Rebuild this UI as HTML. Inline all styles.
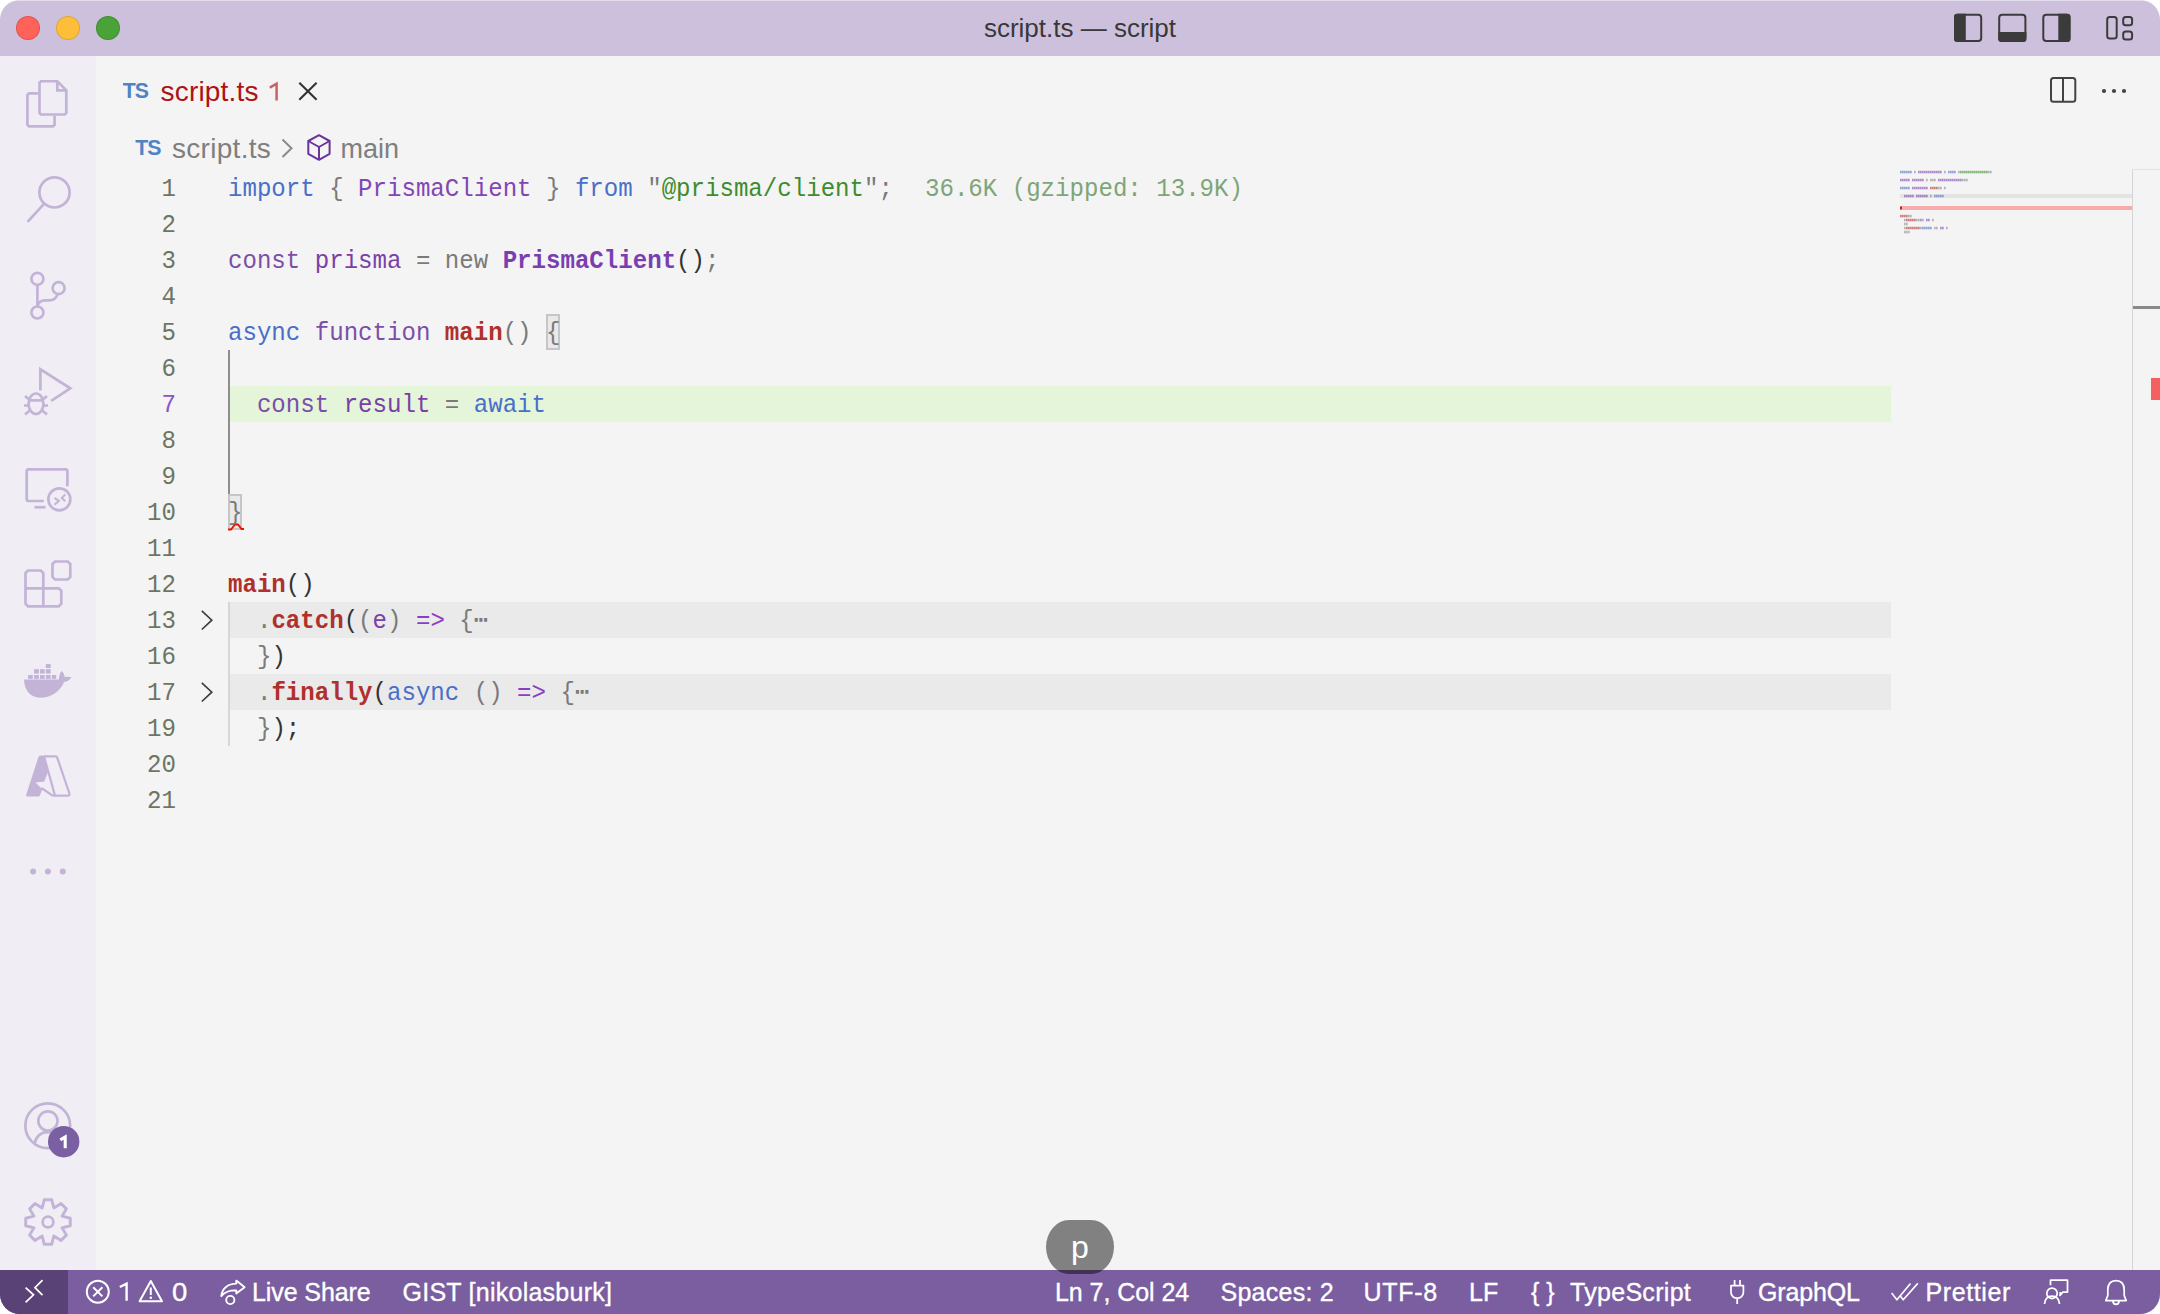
<!DOCTYPE html>
<html><head><meta charset="utf-8">
<style>
*{margin:0;padding:0;box-sizing:border-box}
html,body{width:2160px;height:1314px;overflow:hidden;background:#ffffff}
body{position:relative;font-family:"Liberation Sans",sans-serif}
.abs{position:absolute}
#win{position:absolute;left:0;top:0;width:2160px;height:1314px;border-radius:20px;overflow:hidden;background:#f3f3f3}
#title{position:absolute;left:0;top:0;width:2160px;height:56px;background:#cdc0dd}
#title .t{position:absolute;left:0;width:2160px;top:0;height:56px;line-height:56px;text-align:center;font-size:26px;color:#383838}
.tl{position:absolute;top:16px;width:24px;height:24px;border-radius:50%;box-shadow:inset 0 0 0 1px rgba(0,0,0,0.13)}
#act{position:absolute;left:0;top:56px;width:96px;height:1214px;background:#f0eef4}
#status{position:absolute;left:0;top:1270px;width:2160px;height:44px;background:#7a5ea0;color:#fff;font-size:25px}
.it{position:absolute;height:44px;line-height:44px;white-space:nowrap;font-size:25px;color:#fff;-webkit-text-stroke:0.35px #fff}
#editor{position:absolute;left:96px;top:56px;width:2064px;height:1214px;background:#f4f4f4}
.code{position:absolute;font-family:"Liberation Mono",monospace;font-size:26px;line-height:36px;white-space:pre;transform:scaleX(0.9263);transform-origin:0 0}
.ln{position:absolute;left:96px;width:80px;text-align:right;font-family:"Liberation Mono",monospace;font-size:26px;line-height:36px;color:#6d7563;transform:scaleX(0.9263);transform-origin:100% 0}

.kw{color:#4a6fc8}
.g{color:#7a7a7a}
.d{color:#333333}
.ty{color:#8245b4}
.tyb{color:#7a3eb0;font-weight:bold}
.pu{color:#7b4fa8}
.pv{color:#7a40a8}
.str{color:#3d8c2d}
.dec{color:#7ea579}
.fn{color:#b0302c;font-weight:bold}
.ar{color:#8a3fc0}
</style></head><body>
<div id="win">
  <div id="title">
    <div class="tl" style="left:16px;background:#fe6259"></div>
    <div class="tl" style="left:56px;background:#fdbf3a"></div>
    <div class="tl" style="left:96px;background:#4aa337"></div>
    <div class="abs" style="left:0;top:0;width:2160px;height:1px;background:rgba(255,255,255,0.45)"></div>
    <div class="t">script.ts — script</div>

  <svg class="abs" style="left:1940px;top:0" width="220" height="56" viewBox="1940 0 220 56">
    <g fill="none" stroke="#3b3b3b" stroke-width="2">
      <rect x="1955" y="14.7" width="26.2" height="26.2" rx="3"/>
      <rect x="1999.2" y="14.7" width="26.2" height="26.2" rx="3"/>
      <rect x="2043.3" y="14.7" width="26.2" height="26.2" rx="3"/>
      <rect x="2107.2" y="17" width="9.5" height="21.6" rx="2.5"/>
      <rect x="2123.2" y="17" width="8.9" height="8.2" rx="2.5"/>
      <rect x="2123.2" y="31.4" width="8.9" height="8.2" rx="2.5"/>
    </g>
    <g fill="#3b3b3b">
      <path d="M1957 13.7 L1965.8 13.7 L1965.8 41.9 L1957 41.9 Q1954 41.9 1954 38.9 L1954 16.7 Q1954 13.7 1957 13.7Z"/>
      <path d="M1998.2 32 L2026.4 32 L2026.4 38.9 Q2026.4 41.9 2023.4 41.9 L2001.2 41.9 Q1998.2 41.9 1998.2 38.9Z"/>
      <path d="M2058.3 13.7 L2067.5 13.7 Q2070.5 13.7 2070.5 16.7 L2070.5 38.9 Q2070.5 41.9 2067.5 41.9 L2058.3 41.9Z"/>
    </g>
  </svg>

  </div>
  <div id="act"></div>
  <svg class="abs" style="left:0;top:0" width="96" height="1270" viewBox="0 0 96 1270">
    <g fill="none" stroke="#c3b3d7" stroke-width="2.7" stroke-linejoin="miter">
      <!-- explorer -->
      <path d="M38 93.4 L29 93.4 L27.4 95 L27.4 124.8 L29 126.4 L53 126.4 L54.6 124.8 L54.6 115.8"/>
      <path d="M57.3 81.25 L41 81.25 L39.5 82.8 L39.5 113 L41 114.5 L64.8 114.5 L66.3 113 L66.3 90.3 Z M57.3 81.25 L57.3 90.3 L66.3 90.3"/>
      <!-- search -->
      <circle cx="54.5" cy="192.4" r="15.1"/>
      <path d="M44 203.8 L27.6 221.8"/>
      <!-- source control -->
      <circle cx="37.4" cy="278.9" r="6"/>
      <circle cx="37.4" cy="312.5" r="6"/>
      <circle cx="58.6" cy="288.1" r="6"/>
      <path d="M37.4 285 L37.4 306.5"/>
      <path d="M57.5 294 C56.5 298.5 53.5 300.3 49 300.3 L45 300.3 C41 300.3 38.3 302.5 37.6 306"/>
      <!-- run debug -->
      <path d="M40.4 390.5 L40.4 369.3 L70.3 388.3 L51.2 400.8"/>
      <ellipse cx="36" cy="403.8" rx="7.4" ry="10.3"/>
      <path d="M29.5 400.4 L42.5 400.4"/>
      <path d="M25 396 L29.8 400 M47 396 L42.2 400 M24 405.5 L28.7 405.5 M48 405.5 L43.3 405.5 M25 414.5 L29.8 410.5 M47 414.5 L42.2 410.5"/>
      <!-- remote explorer -->
      <path d="M43.8 501 L28.7 501 Q26.7 501 26.7 499 L26.7 471.4 Q26.7 469.4 28.7 469.4 L65.4 469.4 Q67.4 469.4 67.4 471.4 L67.4 486.2"/>
      <path d="M34.5 507.2 L45.5 507.2"/>
      <circle cx="59.35" cy="499.35" r="11"/>
      <path d="M54.5 497.9 L58.9 500.8 L54.5 504.7 M65.2 494.5 L61.8 497.9 L65.2 501.3" stroke-width="2"/>
      <!-- extensions -->
      <path d="M25.5 573 L28 570.5 L40.8 570.5 L43.3 573 L43.3 588.3 L58.8 588.3 L61.3 590.8 L61.3 603.8 L58.8 606.3 L28 606.3 L25.5 603.8 Z M25.5 588.3 L43.3 588.3 L43.3 606.3"/>
      <path d="M52.5 564 L55 561.5 L67.8 561.5 L70.3 564 L70.3 577 L67.8 579.5 L55 579.5 L52.5 577 Z"/>
      <!-- azure outline -->
      <path d="M44 756.3 L55.5 756.3 Q56.8 756.3 57.3 757.8 L69.4 793.5 Q69.9 795.6 67.8 795.6 L53.5 795.6 Q52.5 795.6 51.5 794.8 L41.5 788" stroke-width="2.2"/>
      <path d="M44.3 757.2 L54.9 795.4" stroke-width="2.2"/>
      <!-- accounts -->
      <circle cx="47.75" cy="1125.75" r="22.4"/>
      <circle cx="47.9" cy="1120.9" r="9.6"/>
      <path d="M34.6 1143.2 Q37.5 1132.2 47.9 1132.2 Q55 1132.2 58.5 1137"/>
      <!-- gear -->
      <path stroke-width="2.9" d="M42.18 1207.96 L44.27 1199.71 L51.73 1199.71 L53.82 1207.96 L61.12 1203.60 L66.40 1208.88 L62.04 1216.18 L70.29 1218.27 L70.29 1225.73 L62.04 1227.82 L66.40 1235.12 L61.12 1240.40 L53.82 1236.04 L51.73 1244.29 L44.27 1244.29 L42.18 1236.04 L34.88 1240.40 L29.60 1235.12 L33.96 1227.82 L25.71 1225.73 L25.71 1218.27 L33.96 1216.18 L29.60 1208.88 L34.88 1203.60Z" stroke-linejoin="round"/>
      <circle cx="48" cy="1222" r="5.4"/>
    </g>
    <g fill="#c3b3d7">
      <!-- docker -->
      <path d="M24 679.6 L58.9 679.6 C59.2 675.5 60 672.5 61.6 671 C63.6 672.7 64.6 675 64.6 677 C67 676.5 69.5 676.6 71.5 677.3 C70 680 67.2 681.8 64.1 682.1 C59.8 692.5 50 697.8 40.4 697.8 C30 697.8 24.3 690 24 679.6 Z"/>
      <rect x="28.1" y="675" width="4.7" height="3.9"/><rect x="34" y="675" width="4.9" height="3.9"/><rect x="40" y="675" width="4.7" height="3.9"/><rect x="45.8" y="675" width="4.9" height="3.9"/><rect x="51.8" y="675" width="4.4" height="3.9"/>
      <rect x="34" y="669.2" width="4.9" height="4.4"/><rect x="40" y="669.2" width="4.7" height="4.4"/><rect x="45.8" y="669.2" width="4.9" height="4.4"/>
      <rect x="45.8" y="664.1" width="4.9" height="3.9"/>
      <!-- azure filled -->
      <path d="M40.5 755.4 L44 755.4 L47.7 772.7 L44.3 781.5 L35.5 782.5 L42.3 789.3 L39.9 795.5 Q39.5 796.6 38 796.6 L27.8 796.6 Q25.7 796.6 26.3 794.5 L38.4 757 Q38.9 755.4 40.5 755.4 Z"/>
      <!-- more -->
      <circle cx="33.1" cy="871.6" r="3"/><circle cx="47.9" cy="871.6" r="3"/><circle cx="62.8" cy="871.6" r="3"/>
      <!-- badge -->
      <circle cx="63.7" cy="1141.7" r="15.7" fill="#7b5fa3"/>
    </g>
    <path d="M60.3 1139.9 L65.2 1137 L65.2 1148.2" fill="none" stroke="#fff" stroke-width="3.1" stroke-linejoin="miter"/>
  </svg>

  <div id="editor"></div>
  
  <!-- tab -->
  <svg class="abs" style="left:118px;top:76px" width="36" height="28" viewBox="0 0 36 28"><text x="4.8" y="22.2" font-family="Liberation Sans" font-weight="bold" font-size="21.3" fill="#4f84c4" letter-spacing="-1">TS</text></svg>
  <div class="abs ui" style="left:160.5px;top:71px;font-size:28px;line-height:42px;color:#ad1313;white-space:nowrap;letter-spacing:0.2px">script.ts</div>
  <svg class="abs" style="left:264px;top:80px" width="20" height="24" viewBox="264 80 20 24"><path d="M269.8 87.6 L276.6 83.6 L276.6 100.5" fill="none" stroke="#c96363" stroke-width="2.5" stroke-linejoin="miter"/></svg>
  <svg class="abs" style="left:296px;top:80px" width="24" height="22" viewBox="0 0 24 22"><path d="M3.3 2.7 L20.6 19.7 M20.6 2.7 L3.3 19.7" stroke="#333" stroke-width="2.1" fill="none"/></svg>
  <svg class="abs" style="left:2040px;top:70px" width="100" height="40" viewBox="2040 70 100 40">
    <rect x="2051" y="77.9" width="24.3" height="23.8" rx="2.5" fill="none" stroke="#424242" stroke-width="2"/>
    <path d="M2063 78 L2063 101.5" stroke="#424242" stroke-width="2"/>
    <circle cx="2104" cy="91" r="2.1" fill="#424242"/><circle cx="2114" cy="91" r="2.1" fill="#424242"/><circle cx="2124" cy="91" r="2.1" fill="#424242"/>
  </svg>
  <!-- breadcrumbs -->
  <svg class="abs" style="left:130px;top:132px" width="36" height="28" viewBox="0 0 36 28"><text x="5.3" y="22.7" font-family="Liberation Sans" font-weight="bold" font-size="21.3" fill="#4f84c4" letter-spacing="-1">TS</text></svg>
  <div class="abs ui" style="left:172px;top:127.5px;font-size:28px;line-height:42px;color:#7f7f7f;white-space:nowrap;letter-spacing:0.3px">script.ts</div>
  <svg class="abs" style="left:278px;top:136px" width="18" height="24" viewBox="0 0 18 24"><path d="M4.5 3.5 L13.5 12.3 L4.5 21" stroke="#8a8a8a" stroke-width="2" fill="none"/></svg>
  <svg class="abs" style="left:302px;top:130px" width="34" height="34" viewBox="0 0 34 34">
    <g fill="none" stroke="#6a349c" stroke-width="2" stroke-linejoin="round">
      <path d="M17 5.2 L27.6 11 L27.6 23.8 L17 29.8 L6.3 23.8 L6.3 11 Z"/>
      <path d="M6.3 11 L17 17 L27.6 11 M17 17 L17 29.8"/>
    </g>
  </svg>
  <div class="abs ui" style="left:340.5px;top:128px;font-size:27px;line-height:42px;color:#7f7f7f;white-space:nowrap">main</div>

  <!-- editor decorations -->
  <div class="abs" style="left:230px;top:386px;width:1661px;height:36px;background:#e5f5d9"></div>
  <div class="abs" style="left:228px;top:602px;width:1663px;height:36px;background:#eaeaea"></div>
  <div class="abs" style="left:228px;top:674px;width:1663px;height:36px;background:#eaeaea"></div>
  <div class="abs" style="left:228px;top:350px;width:2px;height:144px;background:#8e8e8e"></div>
  <div class="abs" style="left:228px;top:602px;width:2px;height:144px;background:#d6d6d6"></div>
  <div class="abs" style="left:546px;top:314px;width:14px;height:36px;background:#e9e9e9;border:2px solid #c6c6c6"></div>
  <div class="abs" style="left:228px;top:494px;width:14px;height:36px;background:#e9e9e9;border:2px solid #c6c6c6"></div>
  <svg class="abs" style="left:227px;top:521px" width="18" height="10" viewBox="0 0 18 10"><path d="M1 8.5 L4 8.5 L8 3.5 L11 3.5 L14.5 8 L17 8" fill="none" stroke="#e51400" stroke-width="1.8"/></svg>
  <svg class="abs" style="left:200px;top:610px" width="14" height="22" viewBox="0 0 14 22"><path d="M1.8 0.9 L11.8 10.2 L1.8 19.5" fill="none" stroke="#3f3f3f" stroke-width="1.7"/></svg>
  <svg class="abs" style="left:200px;top:682px" width="14" height="22" viewBox="0 0 14 22"><path d="M1.8 0.9 L11.8 10.2 L1.8 19.5" fill="none" stroke="#3f3f3f" stroke-width="1.7"/></svg>
  <!-- line numbers -->
  <div class="ln" style="top:171px">1</div>
  <div class="ln" style="top:207px">2</div>
  <div class="ln" style="top:243px">3</div>
  <div class="ln" style="top:279px">4</div>
  <div class="ln" style="top:315px">5</div>
  <div class="ln" style="top:351px">6</div>
  <div class="ln" style="top:387px;color:#8a55c8">7</div>
  <div class="ln" style="top:423px">8</div>
  <div class="ln" style="top:459px">9</div>
  <div class="ln" style="top:495px">10</div>
  <div class="ln" style="top:531px">11</div>
  <div class="ln" style="top:567px">12</div>
  <div class="ln" style="top:603px">13</div>
  <div class="ln" style="top:639px">16</div>
  <div class="ln" style="top:675px">17</div>
  <div class="ln" style="top:711px">19</div>
  <div class="ln" style="top:747px">20</div>
  <div class="ln" style="top:783px">21</div>
  <!-- code -->
  <div class="code" style="left:228px;top:171px"><span class="kw">import</span> <span class="g">{</span> <span class="ty">PrismaClient</span> <span class="g">}</span> <span class="kw">from</span> <span class="g">"</span><span class="str">@prisma/client</span><span class="g">";</span></div>
  <div class="code" style="left:924.5px;top:171px"><span class="dec">36.6K (gzipped: 13.9K)</span></div>
  <div class="code" style="left:228px;top:243px"><span class="pu">const</span> <span class="pv">prisma</span> <span class="g">=</span> <span class="g">new</span> <span class="tyb">PrismaClient</span><span class="d">()</span><span class="g">;</span></div>
  <div class="code" style="left:228px;top:315px"><span class="kw">async</span> <span class="pu">function</span> <span class="fn">main</span><span class="g">()</span> <span class="g">{</span></div>
  <div class="code" style="left:228px;top:387px">  <span class="pu">const</span> <span class="pv">result</span> <span class="g">=</span> <span class="kw">await</span></div>
  <div class="code" style="left:228px;top:495px"><span class="g">}</span></div>
  <div class="code" style="left:228px;top:567px"><span class="fn">main</span><span class="d">()</span></div>
  <div class="code" style="left:228px;top:603px">  <span class="g">.</span><span class="fn">catch</span><span class="d">(</span><span class="g">(</span><span class="pv">e</span><span class="g">)</span> <span class="ar">=&gt;</span> <span class="g">{</span><span class="g">&#x22EF;</span></div>
  <div class="code" style="left:228px;top:639px">  <span class="g">}</span><span class="d">)</span></div>
  <div class="code" style="left:228px;top:675px">  <span class="g">.</span><span class="fn">finally</span><span class="d">(</span><span class="kw">async</span> <span class="g">()</span> <span class="ar">=&gt;</span> <span class="g">{</span><span class="g">&#x22EF;</span></div>
  <div class="code" style="left:228px;top:711px">  <span class="g">}</span><span class="d">);</span></div>

  <div id="status"></div>
  <div class="abs" style="left:0;top:1270px;width:68px;height:44px;background:#584276"></div>
  <svg class="abs" style="left:0;top:1270px" width="68" height="44" viewBox="0 0 68 44">
    <path d="M25.6 17.7 L33.5 24.8 L25.6 32.3 M42.5 10.2 L35 17.7 L42.5 25.2" stroke="#fff" stroke-width="1.75" fill="none"/>
  </svg>
  <svg class="abs" style="left:80px;top:1270px" width="180" height="44" viewBox="80 1270 180 44">
    <g fill="none" stroke="#fff" stroke-width="2">
      <circle cx="97.8" cy="1291.8" r="11"/>
      <path d="M93.2 1287.2 L102.4 1296.4 M102.4 1287.2 L93.2 1296.4"/>
      <path d="M150.8 1281 L162 1301.3 L139.6 1301.3 Z" stroke-linejoin="round"/>
      <path d="M150.8 1287.5 L150.8 1295"/>
    </g>
    <circle cx="150.8" cy="1297.7" r="1.3" fill="#fff"/>
    <g fill="none" stroke="#fff" stroke-width="2" stroke-linejoin="round">
      <path d="M236.3 1280.6 L244.6 1287.2 L236.3 1293.4 L236.3 1290.4 C229.5 1290.2 224.5 1292.4 221.3 1296 C222 1288.3 228 1283.7 236.3 1283.6 Z" stroke-width="1.9"/>
      <circle cx="230.3" cy="1300" r="4.1" stroke-width="1.9"/>
    </g>
  </svg>
  <svg class="abs" style="left:114px;top:1278px" width="20" height="26" viewBox="114 1278 20 26"><path d="M119.8 1287 L126.6 1283.6 L126.6 1300.8" fill="none" stroke="#fff" stroke-width="2.4" stroke-linejoin="miter"/></svg>
  <div class="it" style="left:172px;top:1270px;transform:scaleX(1.1);transform-origin:0 0">0</div>
  <div class="it" style="left:252px;top:1270px;letter-spacing:-0.1px">Live Share</div>
  <div class="it" style="left:402.5px;top:1270px;letter-spacing:0.25px">GIST [nikolasburk]</div>
  <div class="it" style="left:1055px;top:1270px;letter-spacing:-0.05px">Ln 7, Col 24</div>
  <div class="it" style="left:1220.5px;top:1270px;letter-spacing:0.25px">Spaces: 2</div>
  <div class="it" style="left:1363.5px;top:1270px;letter-spacing:0.7px">UTF-8</div>
  <div class="it" style="left:1469px;top:1270px">LF</div>
  <div class="it" style="left:1531px;top:1270px">{ }</div>
  <div class="it" style="left:1570px;top:1270px;letter-spacing:0.3px">TypeScript</div>
  <div class="it" style="left:1758px;top:1270px;letter-spacing:-0.15px">GraphQL</div>
  <div class="it" style="left:1925.5px;top:1270px;letter-spacing:0.6px">Prettier</div>
  <svg class="abs" style="left:1720px;top:1270px" width="440" height="44" viewBox="1720 1270 440 44">
    <g fill="none" stroke="#fff" stroke-width="1.75" stroke-linejoin="round">
      <path d="M1734.6 1280 L1734.6 1285.5 M1740 1280 L1740 1285.5"/>
      <path d="M1731 1285.6 L1743.4 1285.6 L1743.4 1292.3 C1743.4 1295.8 1740.6 1298.2 1737.2 1298.2 C1733.8 1298.2 1731 1295.8 1731 1292.3 Z"/>
      <path d="M1737.2 1298.2 L1737.2 1304"/>
      <path d="M1891.6 1293 L1896.9 1299.8 L1910.5 1283.4 M1900.3 1295.9 L1903.2 1299.8 L1917.8 1283.4" stroke-width="1.6"/>
      <circle cx="2052" cy="1293.3" r="5.2"/>
      <path d="M2044.5 1304 C2045 1298.5 2048 1296 2052 1296 C2056 1296 2059 1298.5 2059.5 1304"/>
      <path d="M2050.5 1285.3 L2050.5 1280.2 L2067.5 1280.2 L2067.5 1292 L2063 1292 L2060 1295.4 L2060.4 1292"/>
      <path d="M2116 1280.5 C2110 1280.5 2107.8 1285 2107.8 1290 L2107.8 1295.5 L2105.8 1300.6 L2126.2 1300.6 L2124.2 1295.5 L2124.2 1290 C2124.2 1285 2122 1280.5 2116 1280.5 Z"/>
      <path d="M2113 1301 C2113 1303.5 2114.3 1304.3 2116 1304.3 C2117.7 1304.3 2119 1303.5 2119 1301"/>
    </g>
  </svg>
  <!-- keystroke bubble -->
  <div class="abs" style="left:1046px;top:1220px;width:68px;height:54px;border-radius:23px/27px;background:rgba(0,0,0,0.47)"></div>
  <div class="abs ui" style="left:1046px;top:1221.5px;width:68px;height:54px;line-height:50px;text-align:center;font-size:32px;color:#fff">p</div>

  <div class="abs" style="left:2132px;top:170px;width:1px;height:1100px;background:#d4d4d4"></div>
  <div class="abs" style="left:2132px;top:169px;width:28px;height:1px;background:#e2e2e2"></div>
  <div class="abs" style="left:2133px;top:306px;width:27px;height:3px;background:#8a8a8a"></div>
  <div class="abs" style="left:2151px;top:378px;width:9px;height:22px;background:#f45f5f"></div>
  <svg class="abs" style="left:1900px;top:170px" width="232" height="70" viewBox="0 0 232 70">
    <rect x="0" y="24" width="232" height="4" fill="#e4e4e4"/>
    <rect x="0" y="36" width="232" height="4" fill="#f7abab"/>
    <rect x="0" y="36.5" width="2" height="3" fill="#c02a2a"/>
    <g opacity="0.6">
<rect x="0" y="0.8" width="1.7" height="2.5" fill="#4a6fc8"/>
<rect x="2" y="0.8" width="1.7" height="2.5" fill="#4a6fc8"/>
<rect x="4" y="0.8" width="1.7" height="2.5" fill="#4a6fc8"/>
<rect x="6" y="0.8" width="1.7" height="2.5" fill="#4a6fc8"/>
<rect x="8" y="0.8" width="1.7" height="2.5" fill="#4a6fc8"/>
<rect x="10" y="0.8" width="1.7" height="2.5" fill="#4a6fc8"/>
<rect x="14" y="0.8" width="1.7" height="2.5" fill="#8a8a8a"/>
<rect x="18" y="0.8" width="1.7" height="2.5" fill="#7e45b0"/>
<rect x="20" y="0.8" width="1.7" height="2.5" fill="#7e45b0"/>
<rect x="22" y="0.8" width="1.7" height="2.5" fill="#7e45b0"/>
<rect x="24" y="0.8" width="1.7" height="2.5" fill="#7e45b0"/>
<rect x="26" y="0.8" width="1.7" height="2.5" fill="#7e45b0"/>
<rect x="28" y="0.8" width="1.7" height="2.5" fill="#7e45b0"/>
<rect x="30" y="0.8" width="1.7" height="2.5" fill="#7e45b0"/>
<rect x="32" y="0.8" width="1.7" height="2.5" fill="#7e45b0"/>
<rect x="34" y="0.8" width="1.7" height="2.5" fill="#7e45b0"/>
<rect x="36" y="0.8" width="1.7" height="2.5" fill="#7e45b0"/>
<rect x="38" y="0.8" width="1.7" height="2.5" fill="#7e45b0"/>
<rect x="40" y="0.8" width="1.7" height="2.5" fill="#7e45b0"/>
<rect x="44" y="0.8" width="1.7" height="2.5" fill="#8a8a8a"/>
<rect x="48" y="0.8" width="1.7" height="2.5" fill="#4a6fc8"/>
<rect x="50" y="0.8" width="1.7" height="2.5" fill="#4a6fc8"/>
<rect x="52" y="0.8" width="1.7" height="2.5" fill="#4a6fc8"/>
<rect x="54" y="0.8" width="1.7" height="2.5" fill="#4a6fc8"/>
<rect x="58" y="0.8" width="1.7" height="2.5" fill="#8a8a8a"/>
<rect x="60" y="0.8" width="1.7" height="2.5" fill="#3d8c2d"/>
<rect x="62" y="0.8" width="1.7" height="2.5" fill="#3d8c2d"/>
<rect x="64" y="0.8" width="1.7" height="2.5" fill="#3d8c2d"/>
<rect x="66" y="0.8" width="1.7" height="2.5" fill="#3d8c2d"/>
<rect x="68" y="0.8" width="1.7" height="2.5" fill="#3d8c2d"/>
<rect x="70" y="0.8" width="1.7" height="2.5" fill="#3d8c2d"/>
<rect x="72" y="0.8" width="1.7" height="2.5" fill="#3d8c2d"/>
<rect x="74" y="0.8" width="1.7" height="2.5" fill="#3d8c2d"/>
<rect x="76" y="0.8" width="1.7" height="2.5" fill="#3d8c2d"/>
<rect x="78" y="0.8" width="1.7" height="2.5" fill="#3d8c2d"/>
<rect x="80" y="0.8" width="1.7" height="2.5" fill="#3d8c2d"/>
<rect x="82" y="0.8" width="1.7" height="2.5" fill="#3d8c2d"/>
<rect x="84" y="0.8" width="1.7" height="2.5" fill="#3d8c2d"/>
<rect x="86" y="0.8" width="1.7" height="2.5" fill="#3d8c2d"/>
<rect x="88" y="0.8" width="1.7" height="2.5" fill="#8a8a8a"/>
<rect x="90" y="0.8" width="1.7" height="2.5" fill="#8a8a8a"/>
<rect x="0" y="8.8" width="1.7" height="2.5" fill="#7e45b0"/>
<rect x="2" y="8.8" width="1.7" height="2.5" fill="#7e45b0"/>
<rect x="4" y="8.8" width="1.7" height="2.5" fill="#7e45b0"/>
<rect x="6" y="8.8" width="1.7" height="2.5" fill="#7e45b0"/>
<rect x="8" y="8.8" width="1.7" height="2.5" fill="#7e45b0"/>
<rect x="12" y="8.8" width="1.7" height="2.5" fill="#7e45b0"/>
<rect x="14" y="8.8" width="1.7" height="2.5" fill="#7e45b0"/>
<rect x="16" y="8.8" width="1.7" height="2.5" fill="#7e45b0"/>
<rect x="18" y="8.8" width="1.7" height="2.5" fill="#7e45b0"/>
<rect x="20" y="8.8" width="1.7" height="2.5" fill="#7e45b0"/>
<rect x="22" y="8.8" width="1.7" height="2.5" fill="#7e45b0"/>
<rect x="26" y="8.8" width="1.7" height="2.5" fill="#8a8a8a"/>
<rect x="30" y="8.8" width="1.7" height="2.5" fill="#8a8a8a"/>
<rect x="32" y="8.8" width="1.7" height="2.5" fill="#8a8a8a"/>
<rect x="34" y="8.8" width="1.7" height="2.5" fill="#8a8a8a"/>
<rect x="38" y="8.8" width="1.7" height="2.5" fill="#7e45b0"/>
<rect x="40" y="8.8" width="1.7" height="2.5" fill="#7e45b0"/>
<rect x="42" y="8.8" width="1.7" height="2.5" fill="#7e45b0"/>
<rect x="44" y="8.8" width="1.7" height="2.5" fill="#7e45b0"/>
<rect x="46" y="8.8" width="1.7" height="2.5" fill="#7e45b0"/>
<rect x="48" y="8.8" width="1.7" height="2.5" fill="#7e45b0"/>
<rect x="50" y="8.8" width="1.7" height="2.5" fill="#7e45b0"/>
<rect x="52" y="8.8" width="1.7" height="2.5" fill="#7e45b0"/>
<rect x="54" y="8.8" width="1.7" height="2.5" fill="#7e45b0"/>
<rect x="56" y="8.8" width="1.7" height="2.5" fill="#7e45b0"/>
<rect x="58" y="8.8" width="1.7" height="2.5" fill="#7e45b0"/>
<rect x="60" y="8.8" width="1.7" height="2.5" fill="#7e45b0"/>
<rect x="62" y="8.8" width="1.7" height="2.5" fill="#8a8a8a"/>
<rect x="64" y="8.8" width="1.7" height="2.5" fill="#8a8a8a"/>
<rect x="66" y="8.8" width="1.7" height="2.5" fill="#8a8a8a"/>
<rect x="0" y="16.8" width="1.7" height="2.5" fill="#4a6fc8"/>
<rect x="2" y="16.8" width="1.7" height="2.5" fill="#4a6fc8"/>
<rect x="4" y="16.8" width="1.7" height="2.5" fill="#4a6fc8"/>
<rect x="6" y="16.8" width="1.7" height="2.5" fill="#4a6fc8"/>
<rect x="8" y="16.8" width="1.7" height="2.5" fill="#4a6fc8"/>
<rect x="12" y="16.8" width="1.7" height="2.5" fill="#7e45b0"/>
<rect x="14" y="16.8" width="1.7" height="2.5" fill="#7e45b0"/>
<rect x="16" y="16.8" width="1.7" height="2.5" fill="#7e45b0"/>
<rect x="18" y="16.8" width="1.7" height="2.5" fill="#7e45b0"/>
<rect x="20" y="16.8" width="1.7" height="2.5" fill="#7e45b0"/>
<rect x="22" y="16.8" width="1.7" height="2.5" fill="#7e45b0"/>
<rect x="24" y="16.8" width="1.7" height="2.5" fill="#7e45b0"/>
<rect x="26" y="16.8" width="1.7" height="2.5" fill="#7e45b0"/>
<rect x="30" y="16.8" width="1.7" height="2.5" fill="#b0302c"/>
<rect x="32" y="16.8" width="1.7" height="2.5" fill="#b0302c"/>
<rect x="34" y="16.8" width="1.7" height="2.5" fill="#b0302c"/>
<rect x="36" y="16.8" width="1.7" height="2.5" fill="#b0302c"/>
<rect x="38" y="16.8" width="1.7" height="2.5" fill="#8a8a8a"/>
<rect x="40" y="16.8" width="1.7" height="2.5" fill="#8a8a8a"/>
<rect x="44" y="16.8" width="1.7" height="2.5" fill="#8a8a8a"/>
<rect x="4" y="24.8" width="1.7" height="2.5" fill="#7e45b0"/>
<rect x="6" y="24.8" width="1.7" height="2.5" fill="#7e45b0"/>
<rect x="8" y="24.8" width="1.7" height="2.5" fill="#7e45b0"/>
<rect x="10" y="24.8" width="1.7" height="2.5" fill="#7e45b0"/>
<rect x="12" y="24.8" width="1.7" height="2.5" fill="#7e45b0"/>
<rect x="16" y="24.8" width="1.7" height="2.5" fill="#7e45b0"/>
<rect x="18" y="24.8" width="1.7" height="2.5" fill="#7e45b0"/>
<rect x="20" y="24.8" width="1.7" height="2.5" fill="#7e45b0"/>
<rect x="22" y="24.8" width="1.7" height="2.5" fill="#7e45b0"/>
<rect x="24" y="24.8" width="1.7" height="2.5" fill="#7e45b0"/>
<rect x="26" y="24.8" width="1.7" height="2.5" fill="#7e45b0"/>
<rect x="30" y="24.8" width="1.7" height="2.5" fill="#8a8a8a"/>
<rect x="34" y="24.8" width="1.7" height="2.5" fill="#4a6fc8"/>
<rect x="36" y="24.8" width="1.7" height="2.5" fill="#4a6fc8"/>
<rect x="38" y="24.8" width="1.7" height="2.5" fill="#4a6fc8"/>
<rect x="40" y="24.8" width="1.7" height="2.5" fill="#4a6fc8"/>
<rect x="42" y="24.8" width="1.7" height="2.5" fill="#4a6fc8"/>
<rect x="0" y="44.8" width="1.7" height="2.5" fill="#b0302c"/>
<rect x="2" y="44.8" width="1.7" height="2.5" fill="#b0302c"/>
<rect x="4" y="44.8" width="1.7" height="2.5" fill="#b0302c"/>
<rect x="6" y="44.8" width="1.7" height="2.5" fill="#b0302c"/>
<rect x="8" y="44.8" width="1.7" height="2.5" fill="#8a8a8a"/>
<rect x="10" y="44.8" width="1.7" height="2.5" fill="#8a8a8a"/>
<rect x="4" y="48.8" width="1.7" height="2.5" fill="#8a8a8a"/>
<rect x="6" y="48.8" width="1.7" height="2.5" fill="#b0302c"/>
<rect x="8" y="48.8" width="1.7" height="2.5" fill="#b0302c"/>
<rect x="10" y="48.8" width="1.7" height="2.5" fill="#b0302c"/>
<rect x="12" y="48.8" width="1.7" height="2.5" fill="#b0302c"/>
<rect x="14" y="48.8" width="1.7" height="2.5" fill="#b0302c"/>
<rect x="16" y="48.8" width="1.7" height="2.5" fill="#8a8a8a"/>
<rect x="18" y="48.8" width="1.7" height="2.5" fill="#8a8a8a"/>
<rect x="20" y="48.8" width="1.7" height="2.5" fill="#7e45b0"/>
<rect x="22" y="48.8" width="1.7" height="2.5" fill="#8a8a8a"/>
<rect x="26" y="48.8" width="1.7" height="2.5" fill="#8a3fc0"/>
<rect x="28" y="48.8" width="1.7" height="2.5" fill="#8a3fc0"/>
<rect x="32" y="48.8" width="1.7" height="2.5" fill="#8a8a8a"/>
<rect x="4" y="52.8" width="1.7" height="2.5" fill="#8a8a8a"/>
<rect x="6" y="52.8" width="1.7" height="2.5" fill="#8a8a8a"/>
<rect x="4" y="56.8" width="1.7" height="2.5" fill="#8a8a8a"/>
<rect x="6" y="56.8" width="1.7" height="2.5" fill="#b0302c"/>
<rect x="8" y="56.8" width="1.7" height="2.5" fill="#b0302c"/>
<rect x="10" y="56.8" width="1.7" height="2.5" fill="#b0302c"/>
<rect x="12" y="56.8" width="1.7" height="2.5" fill="#b0302c"/>
<rect x="14" y="56.8" width="1.7" height="2.5" fill="#b0302c"/>
<rect x="16" y="56.8" width="1.7" height="2.5" fill="#b0302c"/>
<rect x="18" y="56.8" width="1.7" height="2.5" fill="#b0302c"/>
<rect x="20" y="56.8" width="1.7" height="2.5" fill="#8a8a8a"/>
<rect x="22" y="56.8" width="1.7" height="2.5" fill="#4a6fc8"/>
<rect x="24" y="56.8" width="1.7" height="2.5" fill="#4a6fc8"/>
<rect x="26" y="56.8" width="1.7" height="2.5" fill="#4a6fc8"/>
<rect x="28" y="56.8" width="1.7" height="2.5" fill="#4a6fc8"/>
<rect x="30" y="56.8" width="1.7" height="2.5" fill="#4a6fc8"/>
<rect x="34" y="56.8" width="1.7" height="2.5" fill="#8a8a8a"/>
<rect x="36" y="56.8" width="1.7" height="2.5" fill="#8a8a8a"/>
<rect x="40" y="56.8" width="1.7" height="2.5" fill="#8a3fc0"/>
<rect x="42" y="56.8" width="1.7" height="2.5" fill="#8a3fc0"/>
<rect x="46" y="56.8" width="1.7" height="2.5" fill="#8a8a8a"/>
<rect x="4" y="60.8" width="1.7" height="2.5" fill="#8a8a8a"/>
<rect x="6" y="60.8" width="1.7" height="2.5" fill="#8a8a8a"/>
<rect x="8" y="60.8" width="1.7" height="2.5" fill="#8a8a8a"/>
    </g>
  </svg>

</div>
</body></html>
